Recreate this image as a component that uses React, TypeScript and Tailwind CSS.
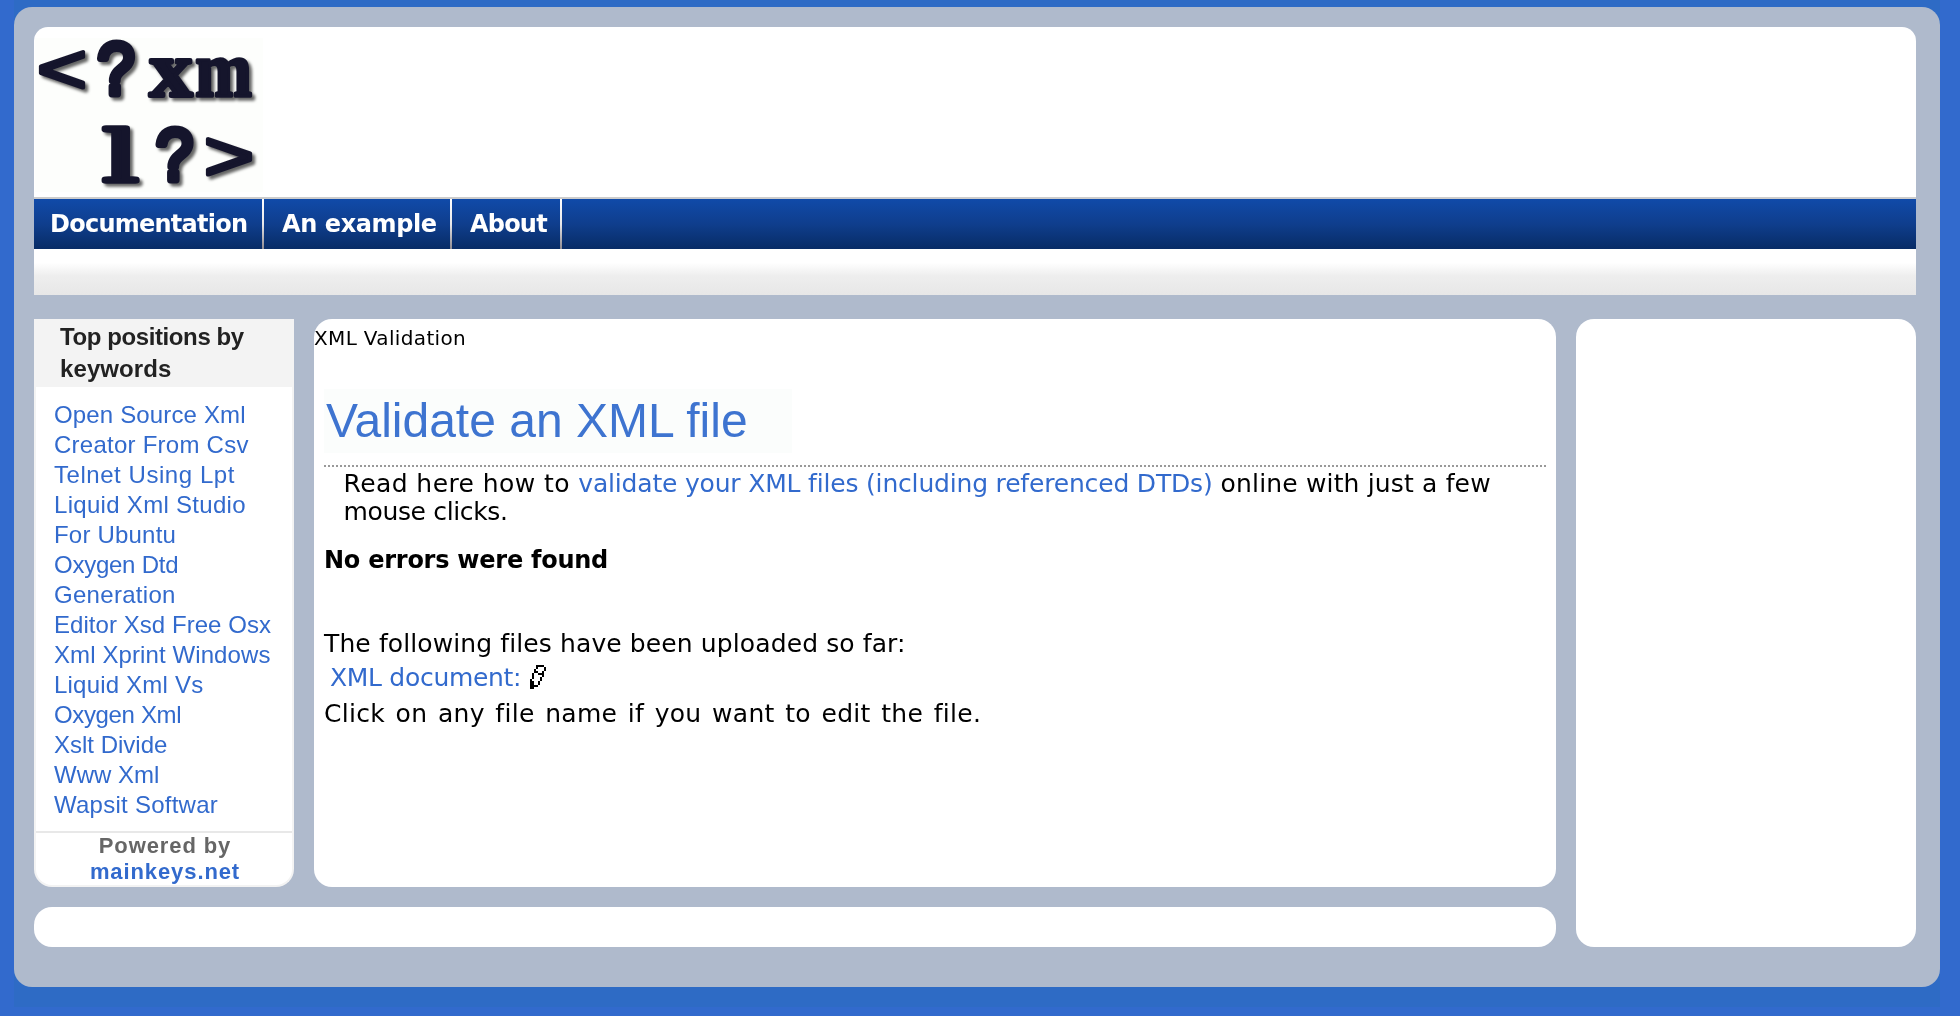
import React from "react";

const keywords: { text: string; tracking: string }[] = [
  { text: "Open Source Xml", tracking: "tracking-[0.15px]" },
  { text: "Creator From Csv", tracking: "tracking-[0.25px]" },
  { text: "Telnet Using Lpt", tracking: "tracking-[0.55px]" },
  { text: "Liquid Xml Studio", tracking: "tracking-[0.3px]" },
  { text: "For Ubuntu", tracking: "tracking-[0.2px]" },
  { text: "Oxygen Dtd", tracking: "tracking-[-0.25px]" },
  { text: "Generation", tracking: "tracking-[0.3px]" },
  { text: "Editor Xsd Free Osx", tracking: "tracking-[0.05px]" },
  { text: "Xml Xprint Windows", tracking: "tracking-[0.1px]" },
  { text: "Liquid Xml Vs", tracking: "tracking-[0.2px]" },
  { text: "Oxygen Xml", tracking: "tracking-[-0.35px]" },
  { text: "Xslt Divide", tracking: "tracking-[0px]" },
  { text: "Www Xml", tracking: "tracking-[0px]" },
  { text: "Wapsit Softwar", tracking: "tracking-[0.25px]" },
];

const pencil = [
  "...####.",
  "...#...#",
  "..#....#",
  "..##..#.",
  ".#..###.",
  ".#....#.",
  ".#...#..",
  "#....#..",
  "##..#...",
  "##..#...",
  "####....",
  "##......",
];

function Pencil() {
  return (
    <svg viewBox="0 0 8 12" className="mt-px h-6 w-4" shapeRendering="crispEdges">
      {pencil.flatMap((row, y) =>
        row.split("").map((c, x) => (c === "#" ? <rect key={`${x}-${y}`} x={x} y={y} width="1" height="1" fill="#000" /> : null)),
      )}
    </svg>
  );
}

type GlyphProps = {
  x: number;
  y: number;
  w: number;
  h: number;
  size: number;
  stroke: number;
  mono?: boolean;
  bold?: boolean;
  children: string;
};

/* One logo character, stretched horizontally by w and vertically by h. */
function Glyph({ x, y, w, h, size, stroke, mono, bold, children }: GlyphProps) {
  return (
    <text
      transform={`translate(${x} ${y}) scale(${w} ${h})`}
      textAnchor="middle"
      fontSize={size}
      fontWeight={bold ? "bold" : "normal"}
      strokeWidth={stroke}
      fontFamily={mono ? '"Liberation Mono", monospace' : '"Liberation Serif", serif'}
    >
      {children}
    </text>
  );
}

function Logo() {
  return (
    <svg viewBox="34 27 240 170" className="block h-[170px] w-[240px] overflow-visible">
      <rect x="35" y="38" width="228" height="154" fill="#fdfefc" />
      <g
        fill="#15152c"
        stroke="#15152c"
        strokeLinejoin="round"
        strokeLinecap="round"
        className="[filter:drop-shadow(3px_3px_1.5px_rgba(0,0,0,0.6))]"
      >
        <Glyph mono x={62} y={93} w={1} h={0.82} size={86} stroke={4.5}>{"<"}</Glyph>
        <Glyph mono x={117} y={94} w={0.88} h={1} size={76} stroke={7}>?</Glyph>
        <Glyph bold x={171} y={96} w={1.1} h={1} size={78} stroke={4}>x</Glyph>
        <Glyph bold x={223.5} y={96} w={0.87} h={1} size={78} stroke={3.5}>m</Glyph>
        <Glyph x={120.5} y={181} w={1.6} h={1} size={77} stroke={5.5}>l</Glyph>
        <Glyph mono x={175.5} y={180} w={0.88} h={1} size={76} stroke={7}>?</Glyph>
        <Glyph mono x={229} y={180} w={1} h={0.82} size={86} stroke={4.5}>{">"}</Glyph>
      </g>
    </svg>
  );
}

function NavItem({ label, className }: { label: string; className: string }) {
  return (
    <div className="flex">
      <a className={`block leading-[51px] whitespace-nowrap ${className}`}>{label}</a>
      <div className="w-0.5 bg-linear-to-b from-white via-[#e8e8ea] to-[#8e8a90]" />
    </div>
  );
}

export default function App() {
  return (
    <div className="h-[1016px] w-[1960px] overflow-hidden bg-[#326acd] pr-5 pl-3.5">
      <div className="h-[1007px] bg-[#2e6bc5] pt-[7px]">
        <div className="h-[980px] rounded-[18px] bg-[#afbacc] pt-5 pr-6 pl-5">
          <header>
            <div className="h-[172px] rounded-t-[14px] border-b-2 border-[#cccccc] bg-white">
              <Logo />
            </div>
            <nav className='flex h-[50px] bg-linear-to-b from-[#104aa9] via-[#0f3e8d] to-[#082c66] font-["DejaVu_Sans",sans-serif] text-[24px] font-bold text-white'>
              <NavItem label="Documentation" className="w-[228px] pl-4 tracking-[-0.75px]" />
              <NavItem label="An example" className="w-[186px] pl-[18px] tracking-[-0.4px]" />
              <NavItem label="About" className="w-[108px] pl-[18px] tracking-[-0.8px]" />
            </nav>
            <div className="h-[46px] bg-linear-to-b from-white from-30% via-[#eeeeee] via-58% to-[#e7e7e7]" />
          </header>

          <div className="mt-6 grid grid-cols-[260px_1242px_340px] grid-rows-[568px_40px] gap-5">
            <aside className='rounded-b-[18px] border-2 border-t-0 border-[#f3f3f3] bg-white font-["Liberation_Sans",Arial,sans-serif]'>
              <h2 className="h-[68px] bg-[#f3f3f3] pt-0.5 pl-6 text-[24px] leading-8 font-bold text-[#222222]">
                <span className="block tracking-[-0.4px]">Top positions by</span>
                <span className="block tracking-[0.1px]">keywords</span>
              </h2>
              <ul className="pt-[13px] pl-[18px] text-[24px] leading-[30px] whitespace-nowrap text-[#326acd]">
                {keywords.map((k) => (
                  <li key={k.text} className={k.tracking}>{k.text}</li>
                ))}
              </ul>
              <div className="mt-[11px] border-t-2 border-[#e8e8e8] pl-0.5 text-center text-[22px] leading-[26px] font-bold tracking-[0.9px]">
                <div className="text-[#666666]">Powered by</div>
                <div className="text-[#326acd]">mainkeys.net</div>
              </div>
            </aside>

            <main className='rounded-[18px] bg-white font-["DejaVu_Sans",sans-serif] text-[25px] leading-7 whitespace-nowrap text-black'>
              <div className="text-[20px] leading-[38px] tracking-[0.35px]">XML Validation</div>
              <div className="mx-2.5 mt-8">
                <h1 className='h-16 w-[468px] bg-[#fbfdfc] pl-0.5 font-["Liberation_Sans",Arial,sans-serif] text-[48px] leading-[63px] text-[#3e74d0]'>
                  Validate an XML file
                </h1>
                <div className="mt-3 h-0.5 bg-[repeating-linear-gradient(90deg,#999_0_2px,#fff_2px_4px)]" />
                <p className="mt-[3px] ml-[19.5px]">
                  <span className="tracking-[0.42px]">Read here how to </span>
                  <a className="tracking-[-0.18px] text-[#326acd]">validate your XML files (including referenced DTDs)</a>
                  <span className="tracking-[0.16px]"> online with just a few</span>
                  <span className="block tracking-[-0.35px]">mouse clicks.</span>
                </p>
                <p className="mt-5 text-[24px] font-bold tracking-[-0.25px]">No errors were found</p>
                <p className="mt-14 tracking-[0.11px]">The following files have been uploaded so far:</p>
                <div className="mt-1.5 flex h-7 pl-1.5">
                  <a className="w-[200px] tracking-[-0.3px] text-[#326acd]">XML document:</a>
                  <Pencil />
                </div>
                <p className="mt-2 tracking-[0.3px] [word-spacing:2.3px]">Click on any file name if you want to edit the file.</p>
              </div>
            </main>

            <section className="row-span-2 rounded-[18px] bg-white" />
            <footer className="col-span-2 rounded-[18px] bg-white" />
          </div>
        </div>
      </div>
    </div>
  );
}
